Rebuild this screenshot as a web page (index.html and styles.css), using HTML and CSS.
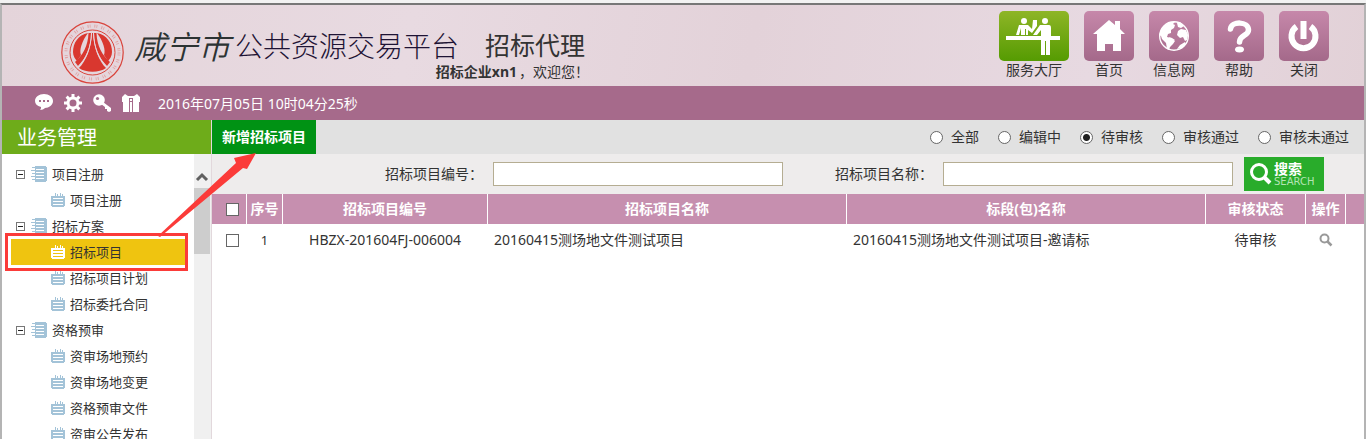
FILE: index.html
```html
<!DOCTYPE html>
<html lang="zh-CN">

<head>
    <meta charset="UTF-8">
    <meta name="viewport" content="width=device-width, initial-scale=1.0">
    <title>招标代理</title>
    <link rel="stylesheet" href="styles.css">
</head>

<body>
    <!-- 图标 -->
    <svg class="sprite" aria-hidden="true">
        <symbol id="book" viewBox="0 0 16 16">
            <path d="M3 0h12v1h1v14h-1v1H3z" fill="currentColor" />
            <path d="M5 3.5h8M5 6.5h8M5 9.5h8M5 12.5h8" stroke="#fff" />
            <path d="M3 0h1v1H3zM3 2h1v2H3zM3 5h1v2H3zM3 8h1v2H3zM3 11h1v2H3zM3 14h1v2H3z" fill="#fff" />
            <path d="M1 1.500h3M0 4.500h4M1 7.500h3M0 10.500h4M1 13.500h3" stroke="currentColor" />
        </symbol>
        <symbol id="note" viewBox="0 0 14 14">
            <path d="M0 3h14v10h-1v1H1v-1H0z" fill="currentColor" />
            <path d="M4.500 0v3M9.500 0v3M6.500 1v2M11.500 1v2" stroke="currentColor" />
            <path class="lines" d="M2 5.500h10M2 8.500h10M2 11.500h10" />
        </symbol>
    </svg>

    <div class="app">
        <header class="header">
            <svg class="logo" viewBox="0 0 63 63" fill="none" stroke="#d9443c">
                <circle cx="31.500" cy="31.500" r="30.700" stroke-width="1.200" />
                <circle cx="31.500" cy="31.500" r="22.500" stroke-width="1" />
                <circle cx="31.500" cy="31.500" r="26.500" stroke-width="3" stroke-dasharray="1 1.200 .8 4" opacity=".35" />
                <g fill="#d9372f" stroke="none">
                    <path d="M27 12c-10 2-15 10-15 19 0 4 2 7 4 9l4-6c-2-5 1-14 7-22z" />
                    <path d="M36 12c10 2 15 10 15 19 0 4-2 7-4 9l-4-6c2-5-1-14-7-22z" />
                    <path d="M27.500 12H30c0 14-5 25-13 33l-3-4c8-7 13-16 13.500-29z" />
                    <path d="M35.500 12H33c0 14 5 25 13 33l3-4c-8-7-13-16-13.500-29z" />
                    <path d="M31 12h1c1 16 6 28 13 35-7 5-20 5-27 0 7-7 12-19 13-35z" />
                </g>
                <path d="M30.500 12c-.5 14-5 26-13.500 34M32.500 12c.5 14 5 26 13.500 34" stroke="#e6d6dd" />
            </svg>
            <div class="brand">
                <div class="titles">
                    <span class="city">咸宁市</span>
                    <span class="platform">公共资源交易平台</span>
                    <h1>招标代理</h1>
                </div>
                <p class="welcome"><b>招标企业xn1</b>，欢迎您！</p>
            </div>
            <nav class="menu">
                <a href="#" class="hall">
                    <svg viewBox="0 0 70 50" fill="#fff">
                        <path d="M7 25h54v4H7z" />
                        <circle cx="25" cy="10" r="3" />
                        <circle cx="46" cy="10" r="3" />
                        <path d="M20 14h9l4 4 1-9h4v6l-5 7-4-3v5h-2v-6h-1v6h-4v-7l-2 7h-3z" />
                        <path d="M41 14h9q2 0 2 3v12h-1v15h-4V30h-1v14h-4V19l-4 5h-4z" />
                    </svg>
                    <span>服务大厅</span>
                </a>
                <a href="#">
                    <svg viewBox="0 0 50 50" fill="#fff">
                        <path d="M9 23L25 9l6 5v-4h5v8l5 5h-4v17h-8v-7h-8v7h-8V23z" />
                    </svg>
                    <span>首页</span>
                </a>
                <a href="#">
                    <svg viewBox="0 0 50 50">
                        <circle cx="25" cy="25" r="14.300" fill="none" stroke="#fff" stroke-width="1.400" />
                        <path d="M12 19c2-4 6-7 10-8h4l-2 2 2 1-1 3-3 2v3l-3 1-1 3 4 1 4 3-2 3-3 3-1 3-2-1-1-6-4-4-1-3-2-1zM28 12l3-1 4 4-3 2-3-1zM29 20l3-2 5 1 2 5-1 5-2 1-2-4-3 1-3-3zM36 31l1 2-4 4-5 1 3-4zM20 26l3 1 3 2-3 1z" fill="#fff" />
                    </svg>
                    <span>信息网</span>
                </a>
                <a href="#">
                    <svg viewBox="0 0 50 50">
                        <path d="M16.500 18c1-8 18-8 18 1 0 6-9 5-9 12" fill="none" stroke="#fff" stroke-width="5.500" stroke-linecap="round" />
                        <ellipse cx="25.500" cy="38.500" rx="4.500" ry="3" fill="#fff" />
                    </svg>
                    <span>帮助</span>
                </a>
                <a href="#">
                    <svg viewBox="0 0 50 50" fill="none" stroke="#fff">
                        <path d="M17.500 15.500a12 12 0 1 0 14 0" stroke-width="6" />
                        <path d="M24.500 10v18" stroke-width="6" />
                    </svg>
                    <span>关闭</span>
                </a>
            </nav>
        </header>

        <div class="bar">
            <a href="#" aria-label="消息">
                <svg viewBox="0 0 18 18" fill="#fff">
                    <path d="M9 0c5 0 9 3 9 7s-4 7-8 7c-1 1-3 2-5 2 1-1 1-2 1-3-4-1-6-3-6-6 0-4 4-7 9-7z" />
                    <path d="M4 6h2v2H4zM8 6h2v2H8zM12 6h2v2h-2z" fill="#a66a8b" />
                </svg>
            </a>
            <a href="#" aria-label="设置">
                <svg viewBox="0 0 18 18" fill="none" stroke="#fff">
                    <circle cx="9" cy="9" r="5" stroke-width="3" />
                    <path d="M9 0v4M9 14v4M0 9h4M14 9h4M2.600 2.600l3 3M12.400 12.400l3 3M2.600 15.400l3-3M12.400 5.600l3-3" stroke-width="3" />
                </svg>
            </a>
            <a href="#" aria-label="密码">
                <svg viewBox="0 0 18 18">
                    <circle cx="6" cy="6" r="5.800" fill="#fff" />
                    <circle cx="4.500" cy="4.500" r="1.600" fill="#a66a8b" />
                    <path d="M8 10l2-2 8 6v3l-2 1-2-1v-2h-2v-2z" fill="#fff" />
                </svg>
            </a>
            <a href="#" aria-label="换肤">
                <svg viewBox="0 0 18 18" fill="#fff">
                    <path d="M3 0l3 2h6l3-2 3 3v5h-1v10H1V8H0V3z" />
                    <path d="M7 4h4v14H7z" fill="#a66a8b" />
                    <path d="M8 5h2v2H8zM8 8h2v10H8z" />
                </svg>
            </a>
            <time>2016年07月05日 10时04分25秒</time>
        </div>

        <div class="content">
            <aside class="side">
                <h2>业务管理</h2>
                <div class="side-body">
                    <ul class="tree">
                        <li>
                            <div class="group"><button class="fold" aria-label="收起"></button><svg><use href="#book" /></svg>项目注册</div>
                            <ul>
                                <li><a href="#"><svg><use href="#note" /></svg>项目注册</a></li>
                            </ul>
                        </li>
                        <li>
                            <div class="group"><button class="fold" aria-label="收起"></button><svg><use href="#book" /></svg>招标方案</div>
                            <ul>
                                <li class="active"><a href="#"><svg><use href="#note" /></svg>招标项目</a>
                                    <div class="mark"></div>
                                    <svg class="arrow" viewBox="0 0 100 84" fill="#fb3b39">
                                        <path d="M0 83L78 10 76 5 98 0 89 16 85 15 2 84z" />
                                    </svg>
                                </li>
                                <li><a href="#"><svg><use href="#note" /></svg>招标项目计划</a></li>
                                <li><a href="#"><svg><use href="#note" /></svg>招标委托合同</a></li>
                            </ul>
                        </li>
                        <li>
                            <div class="group"><button class="fold" aria-label="收起"></button><svg><use href="#book" /></svg>资格预审</div>
                            <ul>
                                <li><a href="#"><svg><use href="#note" /></svg>资审场地预约</a></li>
                                <li><a href="#"><svg><use href="#note" /></svg>资审场地变更</a></li>
                                <li><a href="#"><svg><use href="#note" /></svg>资格预审文件</a></li>
                                <li><a href="#"><svg><use href="#note" /></svg>资审公告发布</a></li>
                            </ul>
                        </li>
                    </ul>
                    <div class="scroll">
                        <svg viewBox="0 0 16 34"><path d="M3 26l5-5 5 5" fill="none" stroke="#606060" stroke-width="3" /></svg>
                        <div class="thumb"></div>
                    </div>
                </div>
            </aside>

            <main class="main">
                <div class="tools">
                    <button class="add">新增招标项目</button>
                    <div class="filter">
                        <label><input type="radio" name="state">全部</label>
                        <label><input type="radio" name="state">编辑中</label>
                        <label><input type="radio" name="state" checked>待审核</label>
                        <label><input type="radio" name="state">审核通过</label>
                        <label><input type="radio" name="state">审核未通过</label>
                    </div>
                </div>
                <form class="search">
                    <label for="code">招标项目编号：</label>
                    <input type="text" id="code">
                    <label for="name">招标项目名称：</label>
                    <input type="text" id="name">
                    <button type="button">
                        <svg viewBox="0 0 24 24" fill="none" stroke="#fff">
                            <circle cx="10" cy="10" r="7.500" stroke-width="3" />
                            <path d="M15 15l6 6" stroke-width="4" />
                        </svg>
                        <span><b>搜索</b><small>SEARCH</small></span>
                    </button>
                </form>
                <table>
                    <colgroup>
                        <col class="c-check">
                        <col class="c-no">
                        <col class="c-code">
                        <col>
                        <col>
                        <col class="c-state">
                        <col class="c-op">
                        <col class="c-end">
                    </colgroup>
                    <thead>
                        <tr>
                            <th class="check"><input type="checkbox" aria-label="全选"></th>
                            <th>序号</th>
                            <th>招标项目编号</th>
                            <th>招标项目名称</th>
                            <th>标段(包)名称</th>
                            <th>审核状态</th>
                            <th>操作</th>
                            <th></th>
                        </tr>
                    </thead>
                    <tbody>
                        <tr>
                            <td class="check"><input type="checkbox" aria-label="选择"></td>
                            <td class="no">1</td>
                            <td>HBZX-201604FJ-006004</td>
                            <td class="left">20160415测场地文件测试项目</td>
                            <td class="left">20160415测场地文件测试项目-邀请标</td>
                            <td>待审核</td>
                            <td>
                                <a href="#" aria-label="查看">
                                    <svg class="view" viewBox="0 0 14 14" fill="none" stroke="#999">
                                        <circle cx="5.500" cy="5.500" r="4" stroke-width="2" />
                                        <path d="M8.500 8.500l4 4" stroke-width="2.500" />
                                    </svg>
                                </a>
                            </td>
                            <td></td>
                        </tr>
                    </tbody>
                </table>
            </main>
        </div>
    </div>
</body>

</html>
```
FILE: styles.css
```css
* {
    box-sizing: border-box;
}

body {
    margin: 0;
    padding-top: 3px;
    height: 100vh;
    overflow: hidden;
    background-color: #f2f2f2;
    color: #333;
    font: 14px/20px "Noto Sans", "Noto Sans CJK SC", sans-serif;
}

h1,
h2,
p,
ul {
    margin: 0;
    padding: 0;
}

li {
    list-style: none;
}

a {
    color: inherit;
    text-decoration: none;
}

svg {
    display: block;
    flex: none;
}

button,
input {
    margin: 0;
    padding: 0;
    border: 0;
    font: inherit;
}

.sprite {
    position: absolute;
    width: 0;
    height: 0;
}

.app {
    display: flex;
    flex-direction: column;
    height: 100%;
    border: 2px solid #b4b4b4;
    border-top-color: #777;
    border-bottom: 0;
    background-color: #fff;
}

/* 头部 */
.header {
    display: flex;
    height: 81px;
    flex: none;
    padding: 0 35px 0 59px;
    background: linear-gradient(100deg, #e4d4da, #e8dae1 30%, #e3d2d9 55%, #e7d9e1 80%, #e2d1d7);
}

.logo {
    width: 63px;
    height: 63px;
    margin-top: 16px;
}

.brand {
    display: flex;
    flex-direction: column;
    align-items: flex-end;
    padding: 22px 0 0 10px;
}

.titles {
    display: flex;
    align-items: center;
    height: 36px;
    white-space: nowrap;
}

.city {
    margin-right: 5px;
    color: #2c3333;
    font-family: "Noto Sans CJK SC", sans-serif;
    font-size: 32px;
    font-style: italic;
    font-weight: 350;
}

.platform {
    color: #1e1334;
    font-family: "Noto Sans CJK SC", sans-serif;
    font-size: 28px;
    font-weight: 300;
}

.titles h1 {
    margin: 0 4px 0 26px;
    font-size: 25px;
    font-weight: 400;
}

.welcome {
    line-height: 18px;
}

.welcome b {
    margin-right: 2px;
}

.menu {
    display: flex;
    gap: 15px;
    margin-left: auto;
    padding-top: 6px;
}

.menu a {
    display: flex;
    flex-direction: column;
    align-items: center;
    width: 50px;
    line-height: 18px;
    white-space: nowrap;
}

.menu svg {
    width: 100%;
    height: 50px;
    border-radius: 5px;
    background: linear-gradient(#c688aa, #a4698a);
}

.menu .hall {
    width: 70px;
}

.menu .hall svg {
    background: linear-gradient(#8eb526, #559b02);
}

.bar {
    display: flex;
    align-items: center;
    gap: 11px;
    height: 34px;
    flex: none;
    padding-left: 33px;
    background-color: #a66a8b;
    color: #fff;
}

.bar svg {
    width: 18px;
    height: 18px;
}

.bar time {
    padding: 2px 0 0 7px;
}

.content {
    display: flex;
    flex: 1;
    min-height: 0;
}

/* 左侧菜单 */
.side {
    display: flex;
    flex-direction: column;
    width: 210px;
    flex: none;
    border-right: 1px solid #e2d8dc;
}

.side h2 {
    height: 34px;
    flex: none;
    padding-left: 15px;
    background-color: #6eac1a;
    color: #fff;
    font-size: 20px;
    font-weight: 400;
    line-height: 35px;
}

.side-body {
    display: flex;
    flex: 1;
    min-height: 0;
}

.tree {
    --line: #fff;
    flex: 1;
    padding: 7px 8px 0 9px;
    font-size: 13px;
    line-height: 26px;
}

.group {
    display: flex;
    align-items: center;
    padding-left: 5px;
}

.fold {
    width: 9px;
    height: 9px;
    margin-right: 6px;
    border: 1px solid #777;
    background: linear-gradient(#222, #222) center / 5px 1px no-repeat;
}

.group svg {
    width: 16px;
    height: 16px;
    margin-right: 5px;
    color: #a3c3d8;
}

.tree a {
    display: flex;
    align-items: center;
    padding-left: 40px;
}

.tree a svg {
    width: 14px;
    height: 14px;
    margin-right: 5px;
    color: #a3c3d8;
}

.lines {
    stroke: var(--line);
}

.active {
    --line: #efc410;
    position: relative;
    background-color: #efc410;
}

.tree .active a svg {
    color: #fff;
}

.mark {
    position: absolute;
    inset: -6px -2px -6px -6px;
    border: 3px solid #fb3b39;
    pointer-events: none;
}

.arrow {
    position: absolute;
    z-index: 1;
    left: 147px;
    bottom: 28px;
    width: 100px;
    height: 84px;
    pointer-events: none;
}

.scroll {
    width: 17px;
    background-color: #f0f0f0;
}

.scroll svg {
    width: 16px;
    height: 34px;
}

.thumb {
    width: 16px;
    height: 66px;
    background-color: #cdcdcd;
}

/* 右侧列表 */
.main {
    flex: 1;
    min-width: 0;
}

.tools {
    display: flex;
    justify-content: space-between;
    height: 34px;
    background-color: #e1e1e1;
}

.add {
    padding: 0 10px;
    background-color: #009214;
    color: #fff;
    font-weight: 700;
}

.filter {
    display: flex;
    align-items: center;
    gap: 19px;
    padding-right: 15px;
}

.filter label {
    display: flex;
    align-items: center;
    gap: 8px;
}

.filter input {
    width: 13px;
    height: 13px;
    appearance: none;
    border: 1px solid #666;
    border-radius: 50%;
    background-color: #fff;
}

.filter input:checked {
    background-image: radial-gradient(#222 3px, transparent 4px);
}

.search {
    display: flex;
    align-items: center;
    justify-content: flex-end;
    height: 40px;
    padding-right: 40px;
    background-color: #eeecec;
}

.search label {
    margin-right: 10px;
    white-space: nowrap;
}

.search input {
    width: 290px;
    height: 24px;
    min-width: 0;
    padding: 0 4px;
    border: 1px solid #b5ad92;
    background-color: #fff;
}

#code {
    margin-right: 52px;
}

.search button {
    display: flex;
    align-items: center;
    gap: 1px;
    width: 80px;
    height: 34px;
    margin-left: 11px;
    padding-left: 5px;
    background-color: #29ac2b;
    color: #fff;
    text-align: left;
}

.search button svg {
    width: 24px;
    height: 24px;
}

.search b,
.search small {
    display: block;
}

.search b {
    font-size: 14px;
    line-height: 16px;
}

.search small {
    color: #b4e4b4;
    font: 10px/10px "DejaVu Sans", sans-serif;
}

table {
    width: 100%;
    table-layout: fixed;
    border-collapse: separate;
    border-spacing: 0;
}

.c-check {
    width: 35px;
}

.c-no {
    width: 36px;
}

.c-code {
    width: 205px;
}

.c-state {
    width: 100px;
}

.c-op {
    width: 40px;
}

.c-end {
    width: 18px;
}

th,
td {
    padding: 0;
    text-align: center;
    white-space: nowrap;
}

th {
    height: 30px;
    border-right: 1px solid #fff;
    background-color: #c68faf;
    color: #fff;
}

th:last-child {
    border-right: 0;
}

td {
    height: 32px;
    border-right: 1px solid transparent;
}

td.left {
    padding-left: 6px;
    text-align: left;
}

.no {
    font-size: 13px;
}

.check {
    padding-left: 6px;
}

.check input {
    display: block;
    width: 13px;
    height: 13px;
    margin: 0 auto;
    appearance: none;
    border: 1px solid #666;
    background-color: #fff;
}

.view {
    width: 14px;
    height: 14px;
    margin: 0 auto;
}
```
